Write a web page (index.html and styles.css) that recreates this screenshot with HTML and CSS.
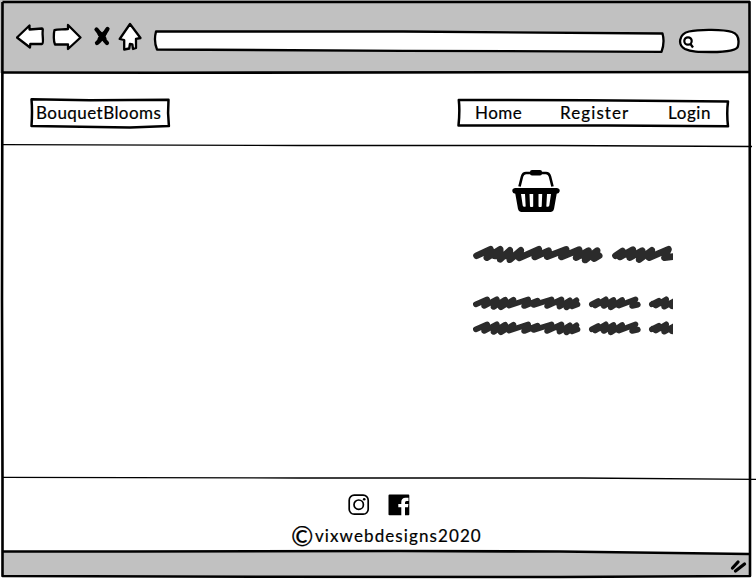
FILE: index.html
```html
<!DOCTYPE html>
<html lang="en">
<head>
<meta charset="utf-8">
<title>BouquetBlooms</title>
<link rel="stylesheet" href="styles.css">
</head>
<body>
<div class="window">
  <div class="toolbar">
    <svg class="nav-icons" viewBox="0 0 128 32" aria-hidden="true">
      <path class="key" d="M1 17.500 13.500 5.500v4L26 8.500c1.500 0 .2 3 .7 7 .2 4 .8 8-.7 8.500H14.300l-.3 3.500z"/>
      <path class="key" d="M38.500 10c3-1 8-.5 13.500-1V5L64.500 17.500 52 29v-4.500H39c-1.500-3-1.500-11-.5-14.500z"/>
      <path class="cross" d="M80.500 9.500c3 3 7 10 10.500 13.500M91.500 9c-3 4-5.500 10.500-10.500 14"/><path class="cross core" d="M84 14 88 18.500M88 14 84 19"/>
      <path class="key" d="M114 4 124.500 18l-4.500.8V28l-3 1-.6-4.500-2.500-.5-.7 4.500-5 1v-9.500l-4.500-1z"/>
    </svg>
    <svg class="address" viewBox="0 0 512 24" aria-hidden="true"><path class="key" d="M3 2.500 250 2.500 509.500 4.500q2.500 9-1 18.300L250 21.800 4 20.500Q.5 12 3 2.500z"/></svg>
    <svg class="search" viewBox="0 0 62 26" aria-hidden="true"><path class="key" d="M11 3.500C22 1 46 1.500 54 4c6 2 7.500 7 6 14-.7 6-21 6-27 6-12 0-20 0-26-3C-.5 17 .5 6 11 3.500z"/><circle class="lens" cx="10" cy="13" r="3.700"/><path class="lens" d="m12.500 16 2.500 3.500"/></svg>
  </div>
  <header class="header">
    <div class="box brand"><svg class="outline" viewBox="0 0 141 32"><path d="M1.500 2.300 60 3.300 138.500 2.800Q137.500 15 138.900 29L100 30.500 1.500 29Q2.500 14 1.500 2.300z"/></svg><span>BouquetBlooms</span></div>
    <nav class="box menu"><svg class="outline" viewBox="0 0 273 30"><path d="M1.800 2 130 2.300 271 3.500Q269.500 15 271 28.300L150 27.500 1.500 27.500Q3 13 1.800 2z"/></svg><span class="home">Home</span><span class="register">Register</span><span class="login">Login</span></nav>
  </header>
  <main class="content">
    <section class="basket-panel">
      <svg class="basket" viewBox="0 0 48 44" aria-hidden="true">
        <path class="handle" d="M7.500 17.500 10 7.500Q11 4 14 4H34Q37 4 38 7.500L40.500 17.500"/>
        <rect x="18" y="1" width="12" height="5.500" rx="2"/>
        <path fill-rule="evenodd" d="M3 19H45q3 .5 2.700 3.200-.5 2.300-3 2.500L42 40q-.5 2.700-3 3H9q-2.500-.3-3-3L3.300 24.700Q.6 24.500.3 22.200 0 19.500 3 19zM9 25l1.700 11.500q.5 1.800 3 1L13 25zM17.500 25l.5 12.500q1.600 1 3.200 0V25zM26.500 25v12.500q1.600 1 3.200 0L30.200 25zM35 25l-.7 12.500q2.500.8 3-1L39 25z"/>
      </svg>
      <svg class="scribble title-line" viewBox="40 270 599 60"><path d="M50 302 92 283 81 308 121 283 121 313 150 286 150 314 183 286 178 309 237 283 225 306 266 287 262 305 319 283 305 306 358 284 349 308 386 287 376 315 412 287 403 311 418 302M467 302 488 288 480 306 519 284 510 308 547 287 538 314 576 286 568 308 626 283 614 308 645 304M105 303H180M352 301H410M480 298H572"/></svg>
      <svg class="scribble text-line" viewBox="40 420 599 48"><path d="M48 448 82 433 73 453 111 433 101 456 136 434 123 457 161 434 148 452 205 433 193 453 233 437 221 450 275 433 262 453 305 433 299 455 330 436 320 457 350 436 337 454 353 448M396 448 415 438 406 452 438 433 432 453 461 435 453 457 487 435 477 452 527 433 517 453 534 449M576 448 597 437 588 452 619 433 613 455 645 437 636 454M90 444H158M295 445H347M405 445H482M580 445H645"/></svg>
      <svg class="scribble text-line" viewBox="40 420 599 48"><path d="M48 448 82 433 73 453 111 433 101 456 136 434 123 457 161 434 148 452 205 433 193 453 233 437 221 450 275 433 262 453 305 433 299 455 330 436 320 457 350 436 337 454 353 448M396 448 415 438 406 452 438 433 432 453 461 435 453 457 487 435 477 452 527 433 517 453 534 449M576 448 597 437 588 452 619 433 613 455 645 437 636 454M90 444H158M295 445H347M405 445H482M580 445H645"/></svg>
    </section>
  </main>
  <footer class="footer">
    <div class="social">
      <svg viewBox="0 0 22 22" aria-label="Instagram"><rect class="thin" x="1.200" y="1.200" width="19" height="19" rx="5"/><circle class="thin" cx="10.700" cy="10.700" r="4.700"/><circle cx="16.200" cy="5.200" r="1.300"/></svg>
      <svg viewBox="0 0 22 22" aria-label="Facebook"><path fill-rule="evenodd" d="M1.500.5h19q.8.200.8 1v19q0 .8-.8.800H17v-8h3l.4-3.300H17V8.500q0-1.500 1.500-1.600h2V3.700h-3q-4.200.2-4.200 4.300v2h-3v3.300h3v8H1.500q-1 0-1-.8v-19q0-1 1-1z"/></svg>
    </div>
    <div class="credit"><span class="copy">©</span><span class="author">vixwebdesigns2020</span></div>
  </footer>
  <div class="statusbar"></div>
  <svg class="frame" viewBox="0 0 756 579" aria-hidden="true">
    <path class="base" d="M3 551.500 400 551 560 551.500 749 554V577H3z"/>
    <path class="edge" d="M2.500 2 300 2 749.500 2 750 300 750 576 560 577 280 576.800 2.500 576 2.500 480 2 300 2.500 2"/>
    <path class="edge" d="M2 72.500 160 72.700 750 72M3 551.500 130 551.500 400 551 560 551.500 749 554"/>
    <path class="rule" d="M3 144.700 300 145.500 550 145.500 752 146.500M3 477.300 300 478 580 478 756 479.300"/>
    <path class="grip" d="M732.500 568 738 562M735.500 571 744.500 564"/>
  </svg>
</div>
</body>
</html>
```
FILE: styles.css
```css
body { margin: 0; background: #fff; }
svg { display: block; flex: none; }
.window {
  position: relative;
  display: flex;
  flex-direction: column;
  width: 756px;
  height: 579px;
  overflow: hidden;
  color: #000;
  font: 17px/22px Lato, "Liberation Sans", sans-serif;
  -webkit-text-stroke: 0.2px #000;
}
.toolbar {
  display: flex;
  box-sizing: border-box;
  width: 750px;
  height: 73px;
  padding: 20px 0 0 16px;
  background: #c1c1c1;
}
.nav-icons { width: 128px; height: 32px; }
.key { fill: #fff; stroke: #000; stroke-width: 2.3; stroke-linejoin: round; }
.cross { fill: none; stroke: #000; stroke-width: 4.2; stroke-linecap: round; }
.core { stroke-width: 5; }
.address { width: 512px; height: 24px; margin: 9px 0 0 9px; }
.search { width: 62px; height: 26px; margin: 8px 0 0 13px; }
.lens { fill: none; stroke: #000; stroke-width: 2.2; }
.header {
  display: flex;
  justify-content: space-between;
  box-sizing: border-box;
  height: 73px;
  padding: 24px 27px 0 30px;
}
.box { position: relative; display: flex; box-sizing: border-box; white-space: nowrap; }
.outline {
  position: absolute;
  inset: 0;
  width: 100%;
  height: 100%;
  fill: none;
  stroke: #000;
  stroke-width: 2.5;
  stroke-linejoin: round;
}
.brand { width: 141px; height: 32px; padding: 5px 0 0 6px; letter-spacing: 0.45px; }
.menu { width: 273px; height: 30px; padding: 4px 0 0 18px; margin: 1px -1px 0 0; }
.home { width: 85px; letter-spacing: 0.5px; }
.register { width: 108px; letter-spacing: 1.1px; }
.login { letter-spacing: 0.6px; }
.content { height: 332px; }
.basket-panel { margin-left: 473px; padding-top: 23px; }
.basket { width: 48px; height: 44px; margin-left: 39px; }
.handle { fill: none; stroke: #000; stroke-width: 2.6; }
.scribble { width: 200px; fill: none; stroke: #2b2b2b; stroke-linecap: round; stroke-linejoin: round; }
.title-line { height: 20px; margin: 32px 0 30px; stroke-width: 20; }
.text-line { height: 16px; margin-bottom: 9px; stroke-width: 17; }
.footer {
  display: flex;
  flex-direction: column;
  box-sizing: border-box;
  height: 73px;
  padding: 15px 0 0 291px;
}
.social { display: flex; gap: 18px; margin: 1px 0 0 57px; }
.social svg { width: 22px; height: 22px; }
.thin { fill: none; stroke: #000; stroke-width: 1.7; }
.credit { display: flex; align-items: center; height: 30px; margin-top: 5px; }
.copy { width: 24px; font-size: 27px; line-height: 30px; }
.author { letter-spacing: 1.1px; }
.statusbar { height: 28px; }
.frame { position: absolute; inset: 0; width: 756px; height: 579px; pointer-events: none; }
.base { fill: #c1c1c1; }
.edge { fill: none; stroke: #000; stroke-width: 2.6; stroke-linejoin: round; }
.rule { fill: none; stroke: #000; stroke-width: 1.3; }
.grip { fill: none; stroke: #000; stroke-width: 3.3; stroke-linecap: round; }
```
